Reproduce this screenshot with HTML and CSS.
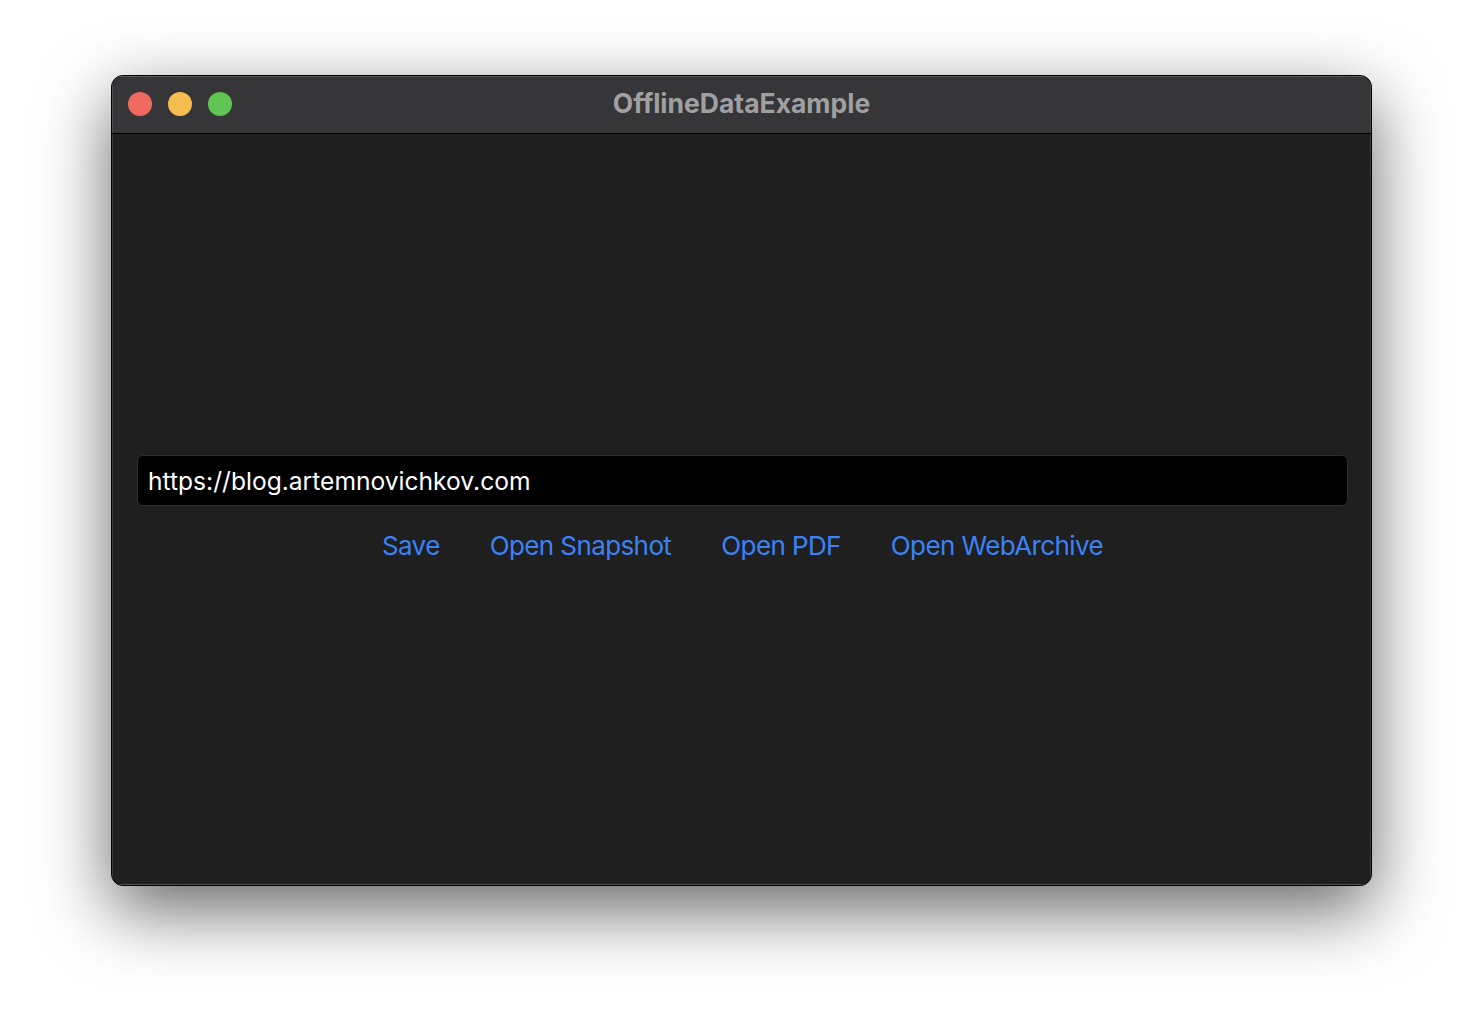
FILE: index.html
```html
<!DOCTYPE html>
<html>
<head>
<meta charset="utf-8">
<link rel="stylesheet" href="styles.css">
</head>
<body>
<div class="window">
  <div class="titlebar">
    <div class="lights">
      <span class="light red"></span>
      <span class="light yellow"></span>
      <span class="light green"></span>
    </div>
    <div class="title">OfflineDataExample</div>
  </div>
  <div class="content">
    <div class="field">https://blog.artemnovichkov.com</div>
    <div class="actions">
      <span class="action">Save</span>
      <span class="action">Open Snapshot</span>
      <span class="action">Open PDF</span>
      <span class="action">Open WebArchive</span>
    </div>
  </div>
</div>
</body>
</html>
```
FILE: styles.css
```css
html, body {
  margin: 0;
  padding: 0;
  background: #ffffff;
}
body {
  width: 1484px;
  height: 1034px;
  padding: 75px 0 0 111px;
  box-sizing: border-box;
  font-family: Inter, "Noto Sans", sans-serif;
}
.window {
  width: 1261px;
  height: 811px;
  box-sizing: border-box;
  border: 1px solid #000;
  border-radius: 12px;
  overflow: hidden;
  display: flex;
  flex-direction: column;
  background: #1f1f1f;
  box-shadow: 0 24px 70px rgba(0,0,0,0.6);
}
.titlebar {
  position: relative;
  height: 57px;
  flex: none;
  background: #363638;
  border-bottom: 1px solid #000;
  box-shadow: inset 0 1px 0 rgba(255,255,255,0.18), inset 1px 0 0 rgba(255,255,255,0.12), inset -1px 0 0 rgba(255,255,255,0.12);
  display: flex;
  align-items: center;
  justify-content: center;
}
.lights {
  position: absolute;
  left: 16px;
  top: 16px;
  display: flex;
  gap: 16px;
}
.light {
  width: 24px;
  height: 24px;
  border-radius: 50%;
  display: block;
}
.red { background: #ee6a5f; }
.yellow { background: #f5be4f; }
.green { background: #61c554; }
.title {
  color: #a0a0a2;
  font-weight: 700;
  font-size: 26.5px;
  margin-top: -4px;
}
.content {
  flex: 1;
  display: flex;
  flex-direction: column;
  justify-content: center;
  padding: 0 23px 3px 25px;
  box-shadow: inset 1px 0 0 rgba(255,255,255,0.12), inset -1px 0 0 rgba(255,255,255,0.12), inset 0 -1px 0 rgba(255,255,255,0.22);
}
.field {
  height: 51px;
  box-sizing: border-box;
  background: #000;
  border: 1px solid #2e2e2e;
  border-radius: 6px;
  padding: 0 10px;
  display: flex;
  align-items: center;
  color: #fff;
  font-size: 24.6px;
}
.actions {
  display: flex;
  justify-content: center;
  gap: 50px;
  margin-top: 24px;
}
.action {
  color: #3b82f6;
  font-size: 26px;
  letter-spacing: -0.6px;
}
```
